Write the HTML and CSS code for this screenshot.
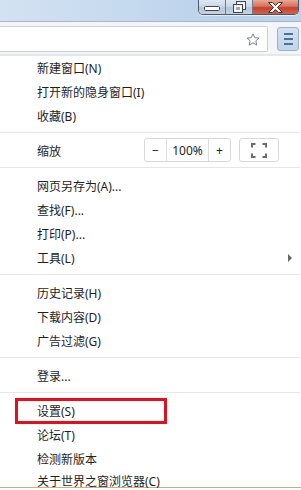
FILE: index.html
```html
<!DOCTYPE html>
<html lang="zh-CN">
<head>
<meta charset="utf-8">
<title>菜单</title>
<link rel="stylesheet" href="styles.css">
</head>
<body>
<div class="window">
  <div class="titlebar">
    <div class="winbtns">
      <div class="wbtn minbtn">
        <svg width="16" height="6" viewBox="0 0 16 6"><rect x="0.5" y="0.5" width="15" height="4" rx="1" fill="#fff" stroke="#3d4652"/></svg>
      </div>
      <div class="wbtn maxbtn">
        <svg width="13" height="12" viewBox="0 0 13 12"><rect x="3.5" y="0.5" width="9" height="8" fill="#e9eef4" stroke="#3d4652"/><rect x="4.5" y="2.5" width="7" height="5" fill="none" stroke="#fff"/><rect x="0.5" y="3.5" width="9" height="8" fill="#e9eef4" stroke="#3d4652"/><rect x="2.5" y="5.5" width="5" height="4" fill="#9aa7b6" stroke="#fff"/></svg>
      </div>
      <div class="wbtn closebtn">
        <svg width="17" height="11" viewBox="0 0 17 11"><path d="M1.5 0.5h4l3 3 3-3h4l-5 5 5 5h-4l-3-3-3 3h-4l5-5z" fill="#fff" stroke="#5b2a24" stroke-linejoin="round"/></svg>
      </div>
    </div>
  </div>
  <div class="toolbar">
    <div class="addressbar">
      <svg class="star" width="14" height="13" viewBox="0 0 14 13"><path d="M7 0.8l1.8 3.9 4.2.4-3.2 2.8 1 4.2L7 9.9l-3.8 2.2 1-4.2L1 5.1l4.2-.4z" fill="none" stroke="#7d8590" stroke-width="1" stroke-linejoin="round"/></svg>
    </div>
    <div class="menubtn">
      <span></span><span></span><span></span>
    </div>
  </div>
  <div class="menu">
    <div class="item">新建窗口(N)</div>
    <div class="item">打开新的隐身窗口(I)</div>
    <div class="item">收藏(B)</div>
    <div class="sep"></div>
    <div class="item zoomrow">
      <span class="label">缩放</span>
      <div class="zoomctl">
        <span class="zbtn">−</span>
        <span class="zval">100%</span>
        <span class="zbtn">+</span>
      </div>
      <div class="fsbtn">
        <svg width="16" height="15" viewBox="0 0 16 15"><path d="M1 4.5V1h3.5M11.5 1H15v3.5M15 10.5V14h-3.5M4.5 14H1v-3.5" fill="none" stroke="#6b6b6b" stroke-width="2"/></svg>
      </div>
    </div>
    <div class="sep"></div>
    <div class="item">网页另存为(A)...</div>
    <div class="item">查找(F)...</div>
    <div class="item">打印(P)...</div>
    <div class="item sub">工具(L)<span class="arrow"></span></div>
    <div class="sep"></div>
    <div class="item">历史记录(H)</div>
    <div class="item">下载内容(D)</div>
    <div class="item">广告过滤(G)</div>
    <div class="sep"></div>
    <div class="item">登录...</div>
    <div class="sep"></div>
    <div class="item marked">设置(S)</div>
    <div class="item">论坛(T)</div>
    <div class="item">检测新版本</div>
    <div class="item last">关于世界之窗浏览器(C)</div>
  </div>
  <div class="bottomline"></div>
</div>
</body>
</html>
```

FILE: styles.css
```css
*, *::before, *::after { box-sizing: border-box; }
html, body {
  margin: 0;
  padding: 0;
  background: #fff;
}
body {
  width: 301px;
  height: 490px;
  overflow: hidden;
  font-family: "Noto Sans", "Noto Sans CJK SC", sans-serif;
  font-size: 12px;
  color: #1e1e1e;
}
.window {
  display: flex;
  flex-direction: column;
  height: 490px;
}
.titlebar {
  height: 22px;
  flex: none;
  background: linear-gradient(90deg, #d3e2f2 0%, #c6daef 40%, #b9d1ea 75%, #bcd3eb 100%);
  border-bottom: 1px solid #a7b6c6;
  display: flex;
  justify-content: flex-end;
  padding-right: 2px;
}
.winbtns {
  display: flex;
  height: 15px;
  border: 1px solid #4e5864;
  border-top: none;
  border-radius: 0 0 5px 5px;
  overflow: hidden;
  box-shadow: 0 1px 0 rgba(255,255,255,0.6);
}
.wbtn {
  display: flex;
  align-items: center;
  justify-content: center;
  height: 100%;
  background: linear-gradient(180deg, #dfe8f2 0%, #c9d6e4 50%, #b6c6d8 51%, #c5d3e2 100%);
}
.minbtn { width: 27px; border-right: 1px solid #6f7b88; padding-top: 4px; }
.maxbtn { width: 27px; border-right: 1px solid #6f7b88; }
.closebtn {
  width: 45px;
  background: linear-gradient(180deg, #e9a898 0%, #d9705c 45%, #c5412d 55%, #d1644c 100%);
}
.toolbar {
  height: 34px;
  flex: none;
  background: #f3f5f8;
  border-bottom: 2px solid #e4e7eb;
  display: flex;
  align-items: flex-start;
  padding-top: 4px;
}
.addressbar {
  width: 268px;
  height: 26px;
  background: #fff;
  border: 1px solid #cdd2d8;
  border-left: none;
  border-radius: 0 2px 2px 0;
  display: flex;
  align-items: center;
  justify-content: flex-end;
  padding-right: 7px;
}
.star { display: block; }
.menubtn {
  margin-left: 9px;
  margin-top: 1px;
  width: 22px;
  height: 24px;
  border: 1px solid #9cb1c9;
  border-radius: 3px;
  background: linear-gradient(180deg, #d3e1f1 0%, #c3d5ea 100%);
  display: flex;
  flex-direction: column;
  align-items: center;
  justify-content: center;
  gap: 3px;
}
.menubtn span {
  display: block;
  width: 9px;
  height: 2px;
  background: #50709a;
}
.menu {
  flex: 1;
  min-height: 0;
  background: #fff;
  display: flex;
  flex-direction: column;
}
.item {
  height: 24px;
  flex: none;
  display: flex;
  align-items: center;
  padding-left: 37px;
  white-space: nowrap;
  position: relative;
}
.item.last {
  height: 16px;
  align-items: flex-start;
  padding-top: 5px;
  line-height: 12px;
}
.sep {
  height: 1px;
  flex: none;
  margin: 4px 1px 6px 0;
  background: #e6e6e6;
}
.zoomrow .label { width: 107px; }
.zoomctl {
  display: flex;
  height: 24px;
  border: 1px solid #d8d8d8;
  border-radius: 3px;
  margin-top: -2px;
}
.zbtn {
  width: 21px;
  display: flex;
  align-items: center;
  justify-content: center;
}
.zval {
  width: 43px;
  border-left: 1px solid #dcdcdc;
  border-right: 1px solid #dcdcdc;
  display: flex;
  align-items: center;
  justify-content: center;
}
.fsbtn {
  margin-left: 8px;
  margin-top: -2px;
  width: 40px;
  height: 24px;
  border: 1px solid #d8d8d8;
  border-radius: 3px;
  display: flex;
  align-items: center;
  justify-content: center;
}
.sub .arrow {
  position: absolute;
  right: 9px;
  top: 8px;
  width: 0;
  height: 0;
  border-top: 4px solid transparent;
  border-bottom: 4px solid transparent;
  border-left: 4px solid #666;
}
.marked::after {
  content: "";
  position: absolute;
  left: 15px;
  top: -1px;
  width: 152px;
  height: 26px;
  border: 3px solid #e3101c;
}
.bottomline {
  height: 3px;
  flex: none;
  border-top: 1px solid #d6aa7c;
  background: #fff;
}
```
